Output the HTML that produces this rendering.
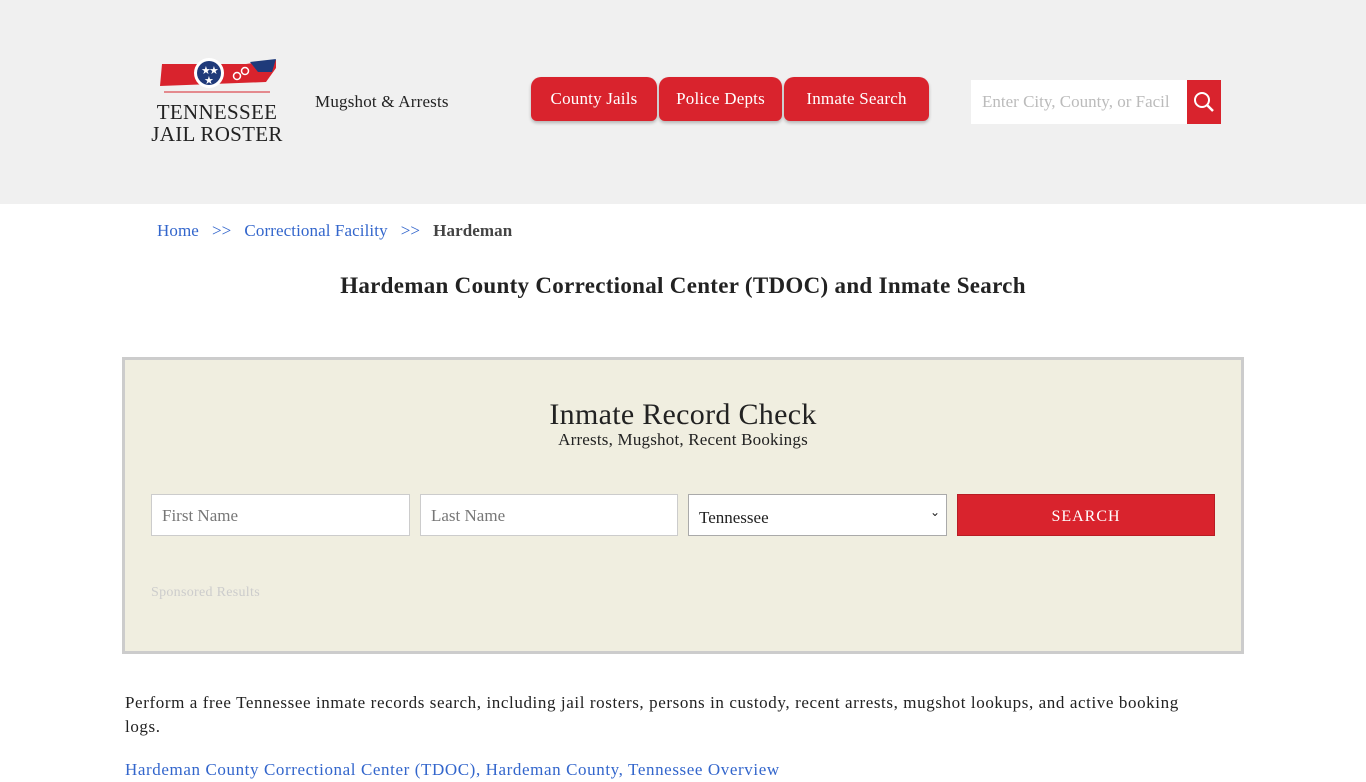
<!DOCTYPE html>
<html><head><meta charset="utf-8"><style>
*{box-sizing:border-box;margin:0;padding:0}
body{width:1366px;height:768px;overflow:hidden;background:#fff;font-family:"Liberation Serif","DejaVu Serif",serif;color:#222}
.hdr{height:204px;background:#f0f0f0;position:relative}
.logo{position:absolute;left:150px;top:58px;width:134px}
.logo .t{font-family:"Liberation Serif",serif;font-size:21px;line-height:22px;color:#222;text-align:center;white-space:nowrap;letter-spacing:0.3px}
.mug{position:absolute;left:315px;top:92px;font-size:17px;color:#222;letter-spacing:0.2px}
.nav{position:absolute;top:77px;left:531px;display:flex}
.nav div{background:#d9232d;color:#fff;font-size:17px;height:44px;line-height:44px;text-align:center;border-radius:10px 10px 6px 6px;margin-right:2px;box-shadow:0 2px 3px rgba(0,0,0,.25);letter-spacing:0.2px}
.sb{position:absolute;left:971px;top:80px;width:250px;height:44px;background:#fff}
.sb span{position:absolute;left:11px;top:12px;font-size:17px;color:#bbb}
.sb i{position:absolute;right:0;top:0;width:34px;height:44px;background:#d9232d}
.bc{position:absolute;top:221px;left:157px;font-size:17px;color:#3366cc;letter-spacing:0.1px}
.bc b{color:#444}
h1{position:absolute;top:273px;width:100%;text-align:center;font-size:23px;font-weight:bold;color:#222;letter-spacing:0.3px}
.box{position:absolute;left:122px;top:357px;width:1122px;height:297px;background:#f0eee0;border:3px solid #ccc}
.box h2{text-align:center;font-weight:normal;font-size:30px;margin-top:38px;color:#222;letter-spacing:0.3px}
.box .s{text-align:center;font-size:17px;margin-top:-2px;letter-spacing:0.2px}
.f{position:absolute;top:134px;height:42px;background:#fff;border:1px solid #ccc;font-size:17px;color:#777;padding:11px 10px}
.btn{position:absolute;top:134px;left:832px;width:258px;height:42px;background:#d9232d;color:#fff;text-align:center;line-height:44px;letter-spacing:1px;font-size:16px;border:1px solid #b81c24}
.sp{position:absolute;left:26px;top:225px;color:#ccc;font-size:14px;letter-spacing:0.3px}
p{position:absolute;left:125px;font-size:17px;line-height:24px;color:#222;letter-spacing:0.6px}
</style></head><body>
<div class="hdr">
<div class="logo">
<svg width="134" height="38" viewBox="-4 0 134 38"><path d="M8 6 L92 6 L122 2 L122 10 L112 24 L6 28 Z" fill="#d9232d"/><path d="M96 4 L122 1 L118 14 L104 14 Z" fill="#1f3a7a"/><circle cx="55" cy="15" r="15" fill="#fff"/><circle cx="55" cy="15" r="12" fill="#1f3a7a"/><text x="47" y="16" fill="#fff" font-size="11">★</text><text x="55" y="16" fill="#fff" font-size="11">★</text><text x="50" y="26" fill="#fff" font-size="11">★</text><circle cx="83" cy="18" r="3.5" fill="none" stroke="#fff" stroke-width="1.5"/><circle cx="91" cy="13" r="3.5" fill="none" stroke="#fff" stroke-width="1.5"/><line x1="10" y1="34" x2="116" y2="34" stroke="#d9232d"/></svg>
<div class="t">TENNESSEE<br>JAIL ROSTER</div></div>
<div class="mug">Mugshot &amp; Arrests</div>
<div class="nav"><div style="width:126px">County Jails</div><div style="width:123px">Police Depts</div><div style="width:145px">Inmate Search</div></div>
<div class="sb"><span>Enter City, County, or Facil</span><i><svg width="34" height="44"><circle cx="15" cy="20" r="7" fill="none" stroke="#fff" stroke-width="2"/><line x1="20" y1="25" x2="26" y2="31" stroke="#fff" stroke-width="2.5"/></svg></i></div>
</div>
<div class="bc">Home &nbsp;&nbsp;&gt;&gt;&nbsp;&nbsp; Correctional Facility &nbsp;&nbsp;&gt;&gt;&nbsp;&nbsp; <b>Hardeman</b></div>
<h1>Hardeman County Correctional Center (TDOC) and Inmate Search</h1>
<div class="box">
<h2>Inmate Record Check</h2>
<div class="s">Arrests, Mugshot, Recent Bookings</div>
<div class="f" style="left:26px;width:259px">First Name</div>
<div class="f" style="left:295px;width:258px">Last Name</div>
<div class="f" style="left:563px;width:259px;color:#222;border-color:#aaa;padding-top:13px">Tennessee<span style="position:absolute;right:6px;top:10px;font-size:12px">&#8964;</span></div>
<div class="btn">SEARCH</div>
<div class="sp">Sponsored Results</div>
</div>
<p style="top:691px;width:1080px">Perform a free Tennessee inmate records search, including jail rosters, persons in custody, recent arrests, mugshot lookups, and active booking logs.</p>
<p style="top:758px;color:#3366cc">Hardeman County Correctional Center (TDOC), Hardeman County, Tennessee Overview</p>
</body></html>
